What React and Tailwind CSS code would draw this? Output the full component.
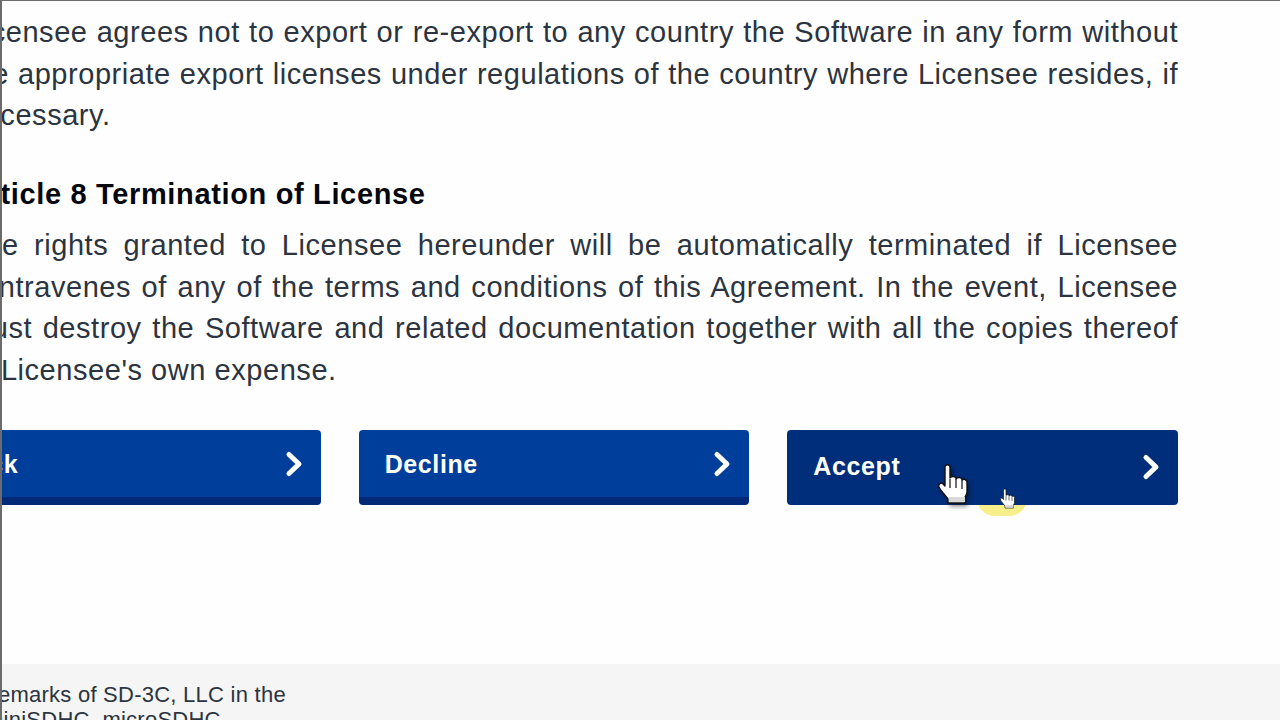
import React from "react";

const HandCursor = ({ className }) => (
  <svg viewBox="0 0 30 40" className={className}>
    <path
      d="M7 3c0-3 5-3 5 0v11c1-2 5-2 6 0v1c1-2 5-2 6 0v1c1-1 5-1 5 2v10c0 2-1 3-2 5v6H10v-4C7 31 3 27 1 23c-1-3 2-5 4-3l2 2z"
      fill="#fff"
      stroke="#111"
      strokeWidth="1.4"
      strokeLinejoin="round"
    />
    <path d="M12 15v9M18 15v9M24 16v9" stroke="#222" strokeWidth="1.3" fill="none" />
    <path d="M11 33h16v5H11z" fill="#d8d8d8" />
  </svg>
);

const Chevron = ({ className }) => (
  <svg viewBox="0 0 22 28" className={"w-[22px] h-[28px] " + className}>
    <path
      d="M5 4.5l10 9.5-10 9.5"
      fill="none"
      stroke="#fff"
      strokeWidth="5"
      strokeLinecap="round"
      strokeLinejoin="round"
    />
  </svg>
);

const Button = ({ label, dark }) => (
  <div
    className={
      "relative flex flex-1 h-[75px] items-center justify-between rounded-[4px] pl-[26px] pr-[15px] " +
      (dark ? "bg-[#002e7a] pb-[2px]" : "bg-[#003e9c] border-b-[8px] border-[#002a78]")
    }
  >
    <span className={"text-[25px] font-bold text-white tracking-[0.6px] " + (dark ? "" : "mt-[2px]")}>
      {label}
    </span>
    <Chevron className={dark ? "" : "mt-[1px]"} />
  </div>
);

const Line = ({ children, last }) => (
  <p className={"h-[41.5px] leading-[41.5px] whitespace-nowrap " + (last ? "" : "[text-align:justify] [text-align-last:justify]")}>
    {children}
  </p>
);

export default function App() {
  return (
    <div className="relative flex flex-col h-[720px] w-[1280px] overflow-hidden bg-[#fefefe] border-t border-l-2 border-[#6b6b6b] font-['Liberation_Sans',Arial,sans-serif]">
      <div className="flex-1 ml-[-35px] mr-[102px] pt-[11px] text-[29px] tracking-[0.55px] text-[#2b3440]">
        <Line>Licensee agrees not to export or re-export to any country the Software in any form without</Line>
        <Line>the appropriate export licenses under regulations of the country where Licensee resides, if</Line>
        <Line last>necessary.</Line>

        <h2 className="mt-[37px] h-[41.5px] leading-[41.5px] font-bold text-[#05070f] tracking-[0.65px]">
          Article 8 Termination of License
        </h2>

        <div className="mt-[10px]">
          <Line>The rights granted to Licensee hereunder will be automatically terminated if Licensee</Line>
          <Line>contravenes of any of the terms and conditions of this Agreement. In the event, Licensee</Line>
          <Line>must destroy the Software and related documentation together with all the copies thereof</Line>
          <Line last>at Licensee's own expense.</Line>
        </div>

        <div className="relative mt-[39px] ml-[-37px] flex gap-[38px]">
          <div className="absolute left-[1047px] top-[50px] w-[50px] h-[36px] rounded-full bg-[#f7f08a]" />
          <Button label="Back" />
          <Button label="Decline" />
          <Button label="Accept" dark />
        </div>
      </div>

      <div className="h-[56px] bg-[#f5f5f5] ml-[-43px] pt-[18px] text-[22px] leading-[25px] tracking-[0.25px] text-[#2b3440]">
        <p className="whitespace-nowrap">trademarks of SD-3C, LLC in the</p>
        <p className="whitespace-nowrap ml-[26px]">miniSDHC, microSDHC</p>
      </div>

      <HandCursor className="absolute left-[936px] top-[463px] w-[30px] h-[40px] drop-shadow-[2px_3px_2px_rgba(0,0,0,0.4)]" />
      <HandCursor className="absolute left-[998px] top-[486px] w-[15px] h-[23px]" />
    </div>
  );
}
